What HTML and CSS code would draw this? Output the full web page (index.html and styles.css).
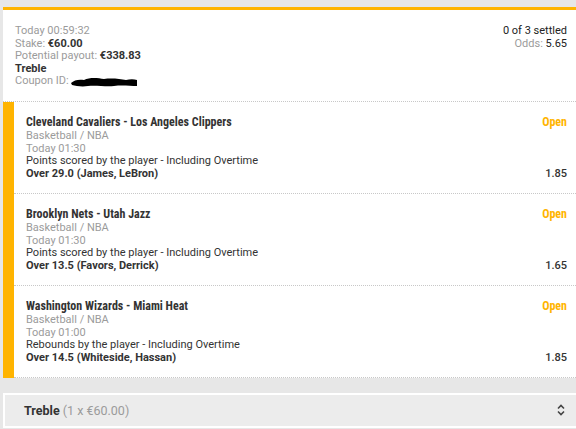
FILE: index.html
```html
<!DOCTYPE html>
<html>
<head>
<meta charset="utf-8">
<link rel="stylesheet" href="styles.css">
</head>
<body>
<div class="coupon">
  <div class="head">
    <div class="info">
      <div class="muted">Today 00:59:32</div>
      <div><span class="muted">Stake:</span> <b>€60.00</b></div>
      <div><span class="muted">Potential payout:</span> <b>€338.83</b></div>
      <div><b>Treble</b></div>
      <div class="coupon-id"><span class="muted">Coupon ID:</span>
        <svg class="redact" width="68" height="12" viewBox="0 0 68 12"><path d="M1 7 C4 4 9 3 14 4 C20 1 28 2 34 3 C42 2 50 3 56 4 C60 3 64 3 67 4 L67 10 C60 10 52 9 44 10 C36 11 26 9 18 10 C12 11 6 10 2 9 Z" fill="#000"/></svg>
      </div>
    </div>
    <div class="summary">
      <div class="settled">0 of 3 settled</div>
      <div><span class="muted">Odds:</span> <span class="odds-total">5.65</span></div>
    </div>
  </div>
  <div class="selections">
    <div class="sel">
      <div class="sel-main">
        <div class="match">Cleveland Cavaliers - Los Angeles Clippers</div>
        <div class="muted">Basketball / NBA</div>
        <div class="muted">Today 01:30</div>
        <div>Points scored by the player - Including Overtime</div>
        <div><b>Over 29.0 (James, LeBron)</b></div>
      </div>
      <div class="sel-side">
        <div class="status">Open</div>
        <div class="odds">1.85</div>
      </div>
    </div>
    <div class="sel">
      <div class="sel-main">
        <div class="match">Brooklyn Nets - Utah Jazz</div>
        <div class="muted">Basketball / NBA</div>
        <div class="muted">Today 01:30</div>
        <div>Points scored by the player - Including Overtime</div>
        <div><b>Over 13.5 (Favors, Derrick)</b></div>
      </div>
      <div class="sel-side">
        <div class="status">Open</div>
        <div class="odds">1.65</div>
      </div>
    </div>
    <div class="sel">
      <div class="sel-main">
        <div class="match">Washington Wizards - Miami Heat</div>
        <div class="muted">Basketball / NBA</div>
        <div class="muted">Today 01:00</div>
        <div>Rebounds by the player - Including Overtime</div>
        <div><b>Over 14.5 (Whiteside, Hassan)</b></div>
      </div>
      <div class="sel-side">
        <div class="status">Open</div>
        <div class="odds">1.85</div>
      </div>
    </div>
  </div>
</div>
<div class="bet-type">
  <div class="picker">
    <span><b>Treble</b> <span class="muted">(1 x €60.00)</span></span>
    <svg class="chev" width="8" height="12" viewBox="0 0 8 12"><path d="M1 4.5 L4 1.5 L7 4.5 M1 7.5 L4 10.5 L7 7.5" fill="none" stroke="#444" stroke-width="1.6"/></svg>
  </div>
</div>
</body>
</html>
```
FILE: styles.css
```css
html, body {
  margin: 0;
  padding: 0;
}
body {
  background: #e7e7e7;
  padding: 7px 0 0 3px;
  font-family: Roboto, "Liberation Sans", sans-serif;
  font-size: 11px;
  color: #333;
  overflow: hidden;
}
b {
  font-weight: 700;
  color: #333;
}
.muted {
  color: #9b9b9b;
}
.coupon {
  background: #fff;
  border-top: 3px solid #ffb400;
}
.head {
  display: flex;
  justify-content: space-between;
  padding: 15px 9px 13px 12px;
  line-height: 12.6px;
  border-bottom: 1px dotted #c8c8c8;
}
.coupon-id {
  display: flex;
  align-items: center;
  gap: 1px;
}
.redact {
  display: block;
}
.summary {
  text-align: right;
}
.settled {
  color: #222;
  font-weight: 400;
}
.odds-total {
  color: #222;
  font-weight: 400;
}
.selections {
  border-left: 11px solid #ffb400;
}
.sel {
  display: flex;
  justify-content: space-between;
  padding: 13px 9px 12px 12px;
  line-height: 12.75px;
  border-bottom: 1px dotted #c8c8c8;
}
.match {
  font-family: "Roboto Condensed", "Liberation Sans Narrow", "DejaVu Sans Condensed", sans-serif;
  font-weight: 700;
  font-size: 12px;
  line-height: 15px;
  color: #333;
}
.sel-side {
  display: flex;
  flex-direction: column;
  justify-content: space-between;
  align-items: flex-end;
}
.status {
  font-family: "Roboto Condensed", "Liberation Sans Narrow", "DejaVu Sans Condensed", sans-serif;
  font-weight: 700;
  font-size: 12px;
  line-height: 15px;
  color: #ffb400;
}
.odds {
  font-weight: 500;
  color: #333;
}
.bet-type {
  padding-top: 15px;
  border-bottom: 1px dotted #c8c8c8;
  padding-bottom: 1px;
}
.picker {
  display: flex;
  justify-content: space-between;
  align-items: center;
  height: 31px;
  border: 2px solid #fff;
  border-right: none;
  background: #ececec;
  padding: 0 11px 0 19px;
  font-size: 12.5px;
}
.chev {
  display: block;
}
```
